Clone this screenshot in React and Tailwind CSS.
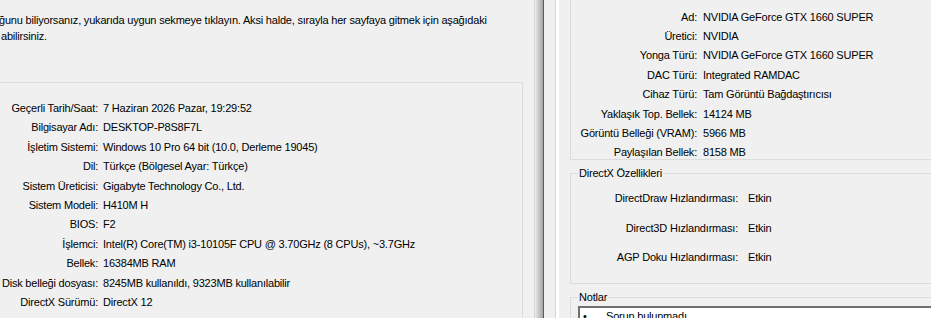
export default function App() {
  const leftRows = [
    ["Geçerli Tarih/Saat:", "7 Haziran 2026 Pazar, 19:29:52"],
    ["Bilgisayar Adı:", "DESKTOP-P8S8F7L"],
    ["İşletim Sistemi:", "Windows 10 Pro 64 bit (10.0, Derleme 19045)"],
    ["Dil:", "Türkçe (Bölgesel Ayar: Türkçe)"],
    ["Sistem Üreticisi:", "Gigabyte Technology Co., Ltd."],
    ["Sistem Modeli:", "H410M H"],
    ["BIOS:", "F2"],
    ["İşlemci:", "Intel(R) Core(TM) i3-10105F CPU @ 3.70GHz (8 CPUs), ~3.7GHz"],
    ["Bellek:", "16384MB RAM"],
    ["Disk belleği dosyası:", "8245MB kullanıldı, 9323MB kullanılabilir"],
    ["DirectX Sürümü:", "DirectX 12"],
  ];
  const gpuRows = [
    ["Ad:", "NVIDIA GeForce GTX 1660 SUPER"],
    ["Üretici:", "NVIDIA"],
    ["Yonga Türü:", "NVIDIA GeForce GTX 1660 SUPER"],
    ["DAC Türü:", "Integrated RAMDAC"],
    ["Cihaz Türü:", "Tam Görüntü Bağdaştırıcısı"],
    ["Yaklaşık Top. Bellek:", "14124 MB"],
    ["Görüntü Belleği (VRAM):", "5966 MB"],
    ["Paylaşılan Bellek:", "8158 MB"],
  ];
  const dxRows = [
    ["DirectDraw Hızlandırması:", "Etkin"],
    ["Direct3D Hızlandırması:", "Etkin"],
    ["AGP Doku Hızlandırması:", "Etkin"],
  ];

  return (
    <div
      className="w-[931px] h-[318px] overflow-hidden flex bg-[#f0f0f0] text-[11px] tracking-[-0.2px] text-black"
      style={{ fontFamily: '"Liberation Sans", Arial, sans-serif' }}
    >
      {/* Left window */}
      <div className="w-[535px] shrink-0 h-full border-r border-[#d9d9d9] overflow-hidden">
        <div className="pt-[12px] leading-[16px] whitespace-nowrap">
          <div className="ml-[-1px]">
            ğunu biliyorsanız, yukarıda uygun sekmeye tıklayın. Aksi halde, sırayla her sayfaya gitmek için aşağıdaki
          </div>
          <div className="ml-[1px]">abilirsiniz.</div>
        </div>
        <div className="mt-[38px] w-[523px] h-[300px] border-t border-r border-[#dcdcdc] pt-[16px] grid grid-cols-[98px_1fr] content-start gap-x-[5px] leading-[19.4px] whitespace-nowrap">
          {leftRows.map(([k, v]) => (
            <div key={k} className="contents">
              <div className="text-right">{k}</div>
              <div>{v}</div>
            </div>
          ))}
        </div>
      </div>

      {/* Window edge / shadow */}
      <div className="w-[8px] shrink-0 bg-linear-to-r from-[#ececec] to-[#a4a4a4]" />
      <div className="w-px shrink-0 bg-[#5a5a5a]" />

      {/* Right window */}
      <div className="flex-1 flex h-full">
        <div className="w-[11px] shrink-0" />
        <div className="w-px shrink-0 bg-[#d5d5d5]" />
        <div className="w-[3px] shrink-0 bg-white" />
        <div className="w-[11px] shrink-0" />
        <div className="w-[420px] shrink-0 flex flex-col">
          {/* Display device group */}
          <div className="shrink-0 h-[160px] border-l border-b border-[#dcdcdc] pt-[7.5px] grid grid-cols-[126px_1fr] content-start gap-x-[6px] gap-y-0 leading-[19.4px] whitespace-nowrap">
            {gpuRows.map(([k, v]) => (
              <div key={k} className="contents">
                <div className="text-right">{k}</div>
                <div>{v}</div>
              </div>
            ))}
          </div>

          {/* DirectX features group */}
          <div className="relative shrink-0 mt-[13px] h-[111px] border border-[#dcdcdc] pt-[15px] grid grid-cols-[167px_1fr] content-start gap-x-[10px] gap-y-[10.3px] leading-[19.4px] whitespace-nowrap">
            <span className="absolute left-[7px] top-[-9px] px-px bg-[#f0f0f0] leading-[16px]">
              DirectX Özellikleri
            </span>
            {dxRows.map(([k, v]) => (
              <div key={k} className="contents">
                <div className="text-right">{k}</div>
                <div>{v}</div>
              </div>
            ))}
          </div>

          {/* Notes group */}
          <div className="relative shrink-0 mt-[13px] h-[60px] border-l border-t border-[#dcdcdc]">
            <span className="absolute left-[7px] top-[-9px] px-px bg-[#f0f0f0] leading-[16px]">
              Notlar
            </span>
            <div className="ml-[7px] mt-[8px] h-[40px] border-t-2 border-l-2 border-[#707070] bg-white leading-[16px]">
              <div className="flex pl-[3px]">
                <span className="w-[23px]">•</span>
                <span>Sorun bulunmadı</span>
              </div>
            </div>
          </div>
        </div>
      </div>
    </div>
  );
}
